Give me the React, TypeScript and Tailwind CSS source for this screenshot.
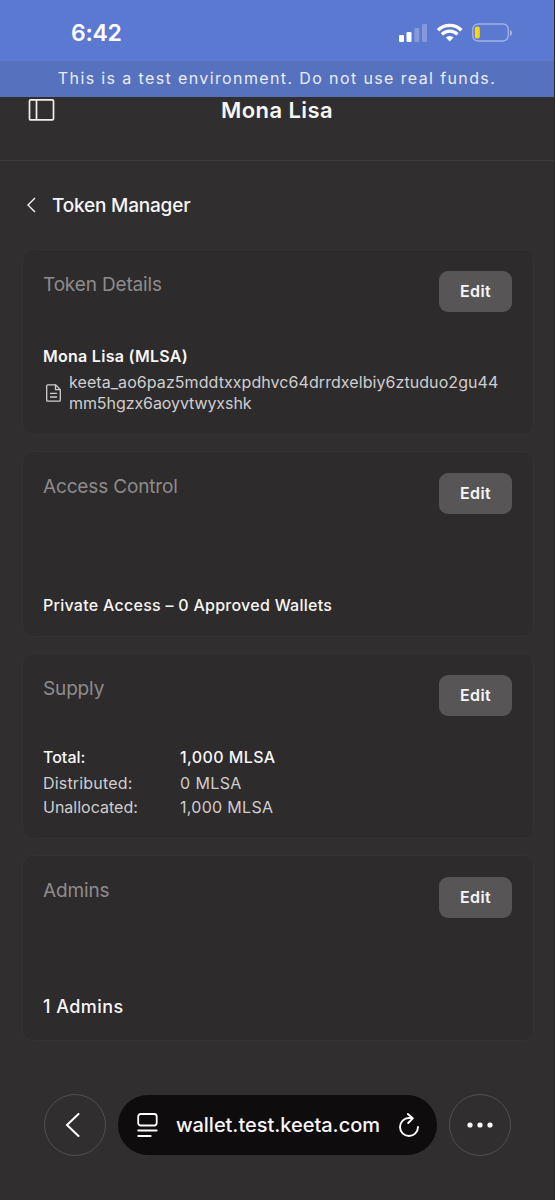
import type { ReactNode } from "react";

function StatusBar() {
  return (
    <div className="flex h-[61px] items-center justify-between bg-[#5b79d1] pr-[42px] pl-[71px] pt-[5px] text-white">
      <span className="text-[23px] leading-7 font-semibold tracking-[-0.3px]">6:42</span>
      <svg width="115" height="20" viewBox="0 0 115 20" fill="none">
        <rect x="1" y="12" width="5" height="7" rx="1.3" fill="white" />
        <rect x="8.5" y="9" width="5" height="10" rx="1.3" fill="white" />
        <rect x="16.3" y="5" width="5" height="14" rx="1.3" fill="white" opacity=".25" />
        <rect x="24" y="1" width="5" height="18" rx="1.3" fill="white" opacity=".25" />
        <path d="M40 7.200a16.500 16.500 0 0 1 23.400 0" stroke="white" strokeWidth="3.400" />
        <path d="M43.900 11.400a11 11 0 0 1 15.600 0" stroke="white" strokeWidth="3.100" />
        <path d="M47.800 14.600a5.800 5.800 0 0 1 7.800 0l-3.900 4z" fill="white" />
        <rect x="74.7" y="1" width="35.6" height="17" rx="5.5" stroke="white" strokeOpacity=".42" strokeWidth="1.4" />
        <rect x="76.8" y="3.5" width="5" height="12" rx="2" fill="#fbd60a" />
        <path d="M112 7v6c1.3-.5 2-1.700 2-3s-.7-2.500-2-3z" fill="white" opacity=".45" />
      </svg>
    </div>
  );
}

function Card({ title, children }: { title: string; children: ReactNode }) {
  return (
    <section className="flex h-[186px] flex-col justify-between rounded-[11px] border border-[#343233] bg-[#2d2b2c] pr-[21px] pl-5">
      <div className="flex items-start justify-between pt-[21px]">
        <h2 className="pt-px text-[19px] leading-[26px] tracking-[-0.15px] text-[#8d8b8c]">{title}</h2>
        <button className="h-[41px] w-[73px] rounded-[9px] bg-[#575556] pb-[2px] text-base font-semibold tracking-[0.4px] text-[#f8f6f7]">
          Edit
        </button>
      </div>
      {children}
    </section>
  );
}

function DocumentIcon() {
  return (
    <svg className="mt-[12px] ml-[3px] shrink-0" width="15" height="18" viewBox="0 0 15 18" fill="none" stroke="#d0cecf" strokeWidth="1.3">
      <path d="M9.500.8H1.700a1 1 0 0 0-1 1v14.400a1 1 0 0 0 1 1h11.600a1 1 0 0 0 1-1V5.600z" strokeLinejoin="round" />
      <path d="M9.500.8v4.800h4.800M4 9.400h7M4 13h7" />
    </svg>
  );
}

export default function App() {
  return (
    <div className="flex h-[1200px] w-[555px] flex-col overflow-hidden border-r border-[#282627] bg-[#302e2f] font-['Inter',sans-serif] whitespace-nowrap text-[#f8f6f7]">
      <div className="-mr-px">
        <StatusBar />
        <div className="flex h-9 items-center justify-center bg-[#5671be] pr-px pb-[2px] text-base tracking-[1.38px] text-[#e9edf8]">
          This is a test environment. Do not use real funds.
        </div>
      </div>

      <header className="grid h-[64px] grid-cols-[1fr_auto_1fr] items-start border-b border-[#3d3b3c] pl-7">
        <svg className="mt-[2px]" width="27" height="22" viewBox="0 0 27 22" fill="none" stroke="#f3eded" strokeWidth="1.7">
          <rect x="1.500" y=".9" width="24" height="20" rx="1.200" />
          <path d="M8.500 1v20" />
        </svg>
        <h1 className="-ml-7 text-[22px] leading-[26px] font-semibold tracking-[0.4px]">Mona Lisa</h1>
      </header>

      <main className="pr-[20px] pl-[22px]">
        <div className="flex h-[88px] items-center gap-[16px] pl-[5px]">
          <svg width="9" height="16" viewBox="0 0 9 16" fill="none" stroke="#f8f6f7" strokeWidth="1.400">
            <path d="M8 1 1 8l7 7" />
          </svg>
          <span className="pt-px text-[19px] leading-7 font-medium tracking-[-0.2px]">Token Manager</span>
        </div>

        <div className="flex flex-col gap-4">
          <Card title="Token Details">
            <div className="pb-[20px] text-base">
              <p className="leading-[22px] font-semibold tracking-[0.27px]">Mona Lisa (MLSA)</p>
              <div className="mt-[5px] flex gap-[8px] text-[#d0cecf]">
                <DocumentIcon />
                <p className="leading-[21px] tracking-[0.07px]">
                  keeta_ao6paz5mddtxxpdhvc64drrdxelbiy6ztuduo2gu44
                  <br />
                  <span className="tracking-[-0.08px]">mm5hgzx6aoyvtwyxshk</span>
                </p>
              </div>
            </div>
          </Card>

          <Card title="Access Control">
            <p className="pb-[20px] text-base leading-[22px] font-medium tracking-[0.27px]">
              Private Access – 0 Approved Wallets
            </p>
          </Card>

          <Card title="Supply">
            <dl className="grid grid-cols-[137px_1fr] pb-[19px] text-base leading-6 text-[#d0cecf]">
              <dt className="pb-[2px] font-medium text-[#f8f6f7]">Total:</dt>
              <dd className="font-medium tracking-[0.4px] text-[#f8f6f7]">1,000 MLSA</dd>
              <dt className="tracking-[0.18px]">Distributed:</dt>
              <dd className="tracking-[0.4px]">0 MLSA</dd>
              <dt>Unallocated:</dt>
              <dd className="tracking-[0.3px]">1,000 MLSA</dd>
            </dl>
          </Card>

          <Card title="Admins">
            <p className="pb-[21px] text-lg leading-6 font-medium tracking-[0.45px]">1 Admins</p>
          </Card>
        </div>
      </main>

      <nav className="mt-[53px] flex items-center gap-3 pl-11">
        <button className="flex size-[62px] items-center justify-center rounded-full border border-[#514f50] bg-[#302e2f]">
          <svg className="mr-1.5" width="15" height="24" viewBox="0 0 15 24" fill="none" stroke="white" strokeWidth="2" strokeLinecap="round" strokeLinejoin="round">
            <path d="M13.500 1 2 12l11.500 11" />
          </svg>
        </button>
        <div className="flex h-[60px] w-[319px] items-center rounded-full bg-[#0e0c0d] pl-[19px]">
          <svg width="21" height="24" viewBox="0 0 21 24" fill="none" stroke="white" strokeWidth="1.800" strokeLinecap="round">
            <rect x="1.200" y="1" width="18.500" height="11.500" rx="2.500" />
            <path d="M1.200 17.500h18.500M1.200 23h12.500" />
          </svg>
          <span className="ml-[18px] w-[204px] text-[20px] leading-7 font-medium tracking-[-0.03px]">
            wallet.test.keeta.com
          </span>
          <svg className="ml-[18px]" width="22" height="25" viewBox="0 0 22 25" fill="none" stroke="white" strokeWidth="1.900" strokeLinecap="round" strokeLinejoin="round">
            <path d="M20 14a9 9 0 1 1-9-9h3.500M9.800 1l5 4.300-4.600 4.700" />
          </svg>
        </div>
        <button className="flex size-[62px] items-center justify-center rounded-full border border-[#514f50] bg-[#302e2f]">
          <svg className="mr-px" width="26" height="6" viewBox="0 0 26 6" fill="white">
            <circle cx="3" cy="3" r="2.600" />
            <circle cx="13" cy="3" r="2.600" />
            <circle cx="23" cy="3" r="2.600" />
          </svg>
        </button>
      </nav>
    </div>
  );
}
